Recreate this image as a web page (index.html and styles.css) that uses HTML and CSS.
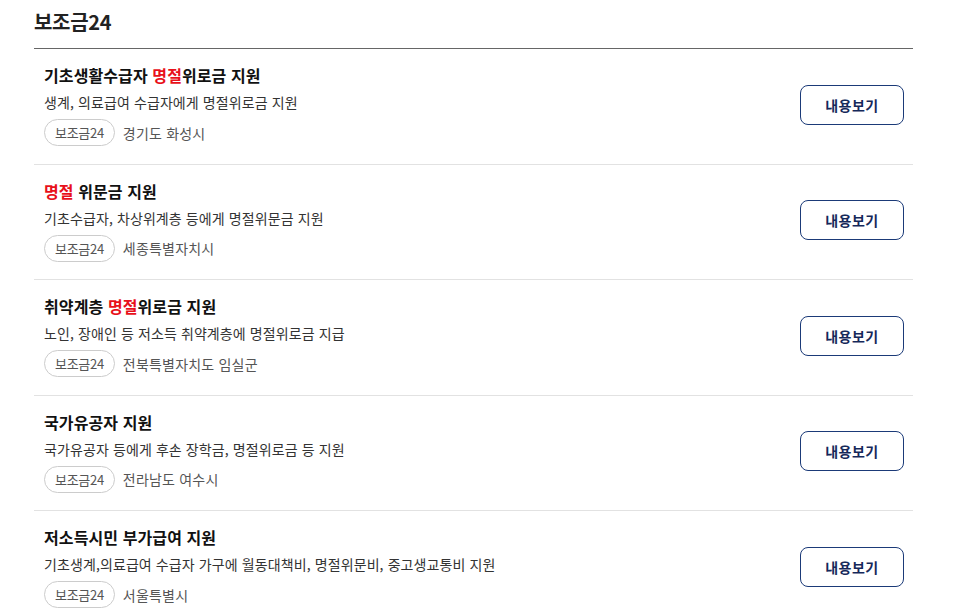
FILE: index.html
```html
<!DOCTYPE html>
<html lang="ko">
<head>
    <meta charset="UTF-8">
    <meta name="viewport" content="width=device-width, initial-scale=1.0">
    <title>보조금24</title>
    <link rel="stylesheet" href="styles.css">
</head>
<body>
    <section class="board">
        <h2 class="board-title">보조금24</h2>
        <ul class="list">
            <li class="item">
                <div class="info">
                    <h3 class="name">기초생활수급자 <em>명절</em>위로금 지원</h3>
                    <p class="desc">생계, 의료급여 수급자에게 명절위로금 지원</p>
                    <div class="meta"><span class="tag">보조금24</span><span class="region">경기도 화성시</span></div>
                </div>
                <button type="button" class="view-btn">내용보기</button>
            </li>
            <li class="item">
                <div class="info">
                    <h3 class="name"><em>명절</em> 위문금 지원</h3>
                    <p class="desc">기초수급자, 차상위계층 등에게 명절위문금 지원</p>
                    <div class="meta"><span class="tag">보조금24</span><span class="region">세종특별자치시</span></div>
                </div>
                <button type="button" class="view-btn">내용보기</button>
            </li>
            <li class="item">
                <div class="info">
                    <h3 class="name">취약계층 <em>명절</em>위로금 지원</h3>
                    <p class="desc">노인, 장애인 등 저소득 취약계층에 명절위로금 지급</p>
                    <div class="meta"><span class="tag">보조금24</span><span class="region">전북특별자치도 임실군</span></div>
                </div>
                <button type="button" class="view-btn">내용보기</button>
            </li>
            <li class="item">
                <div class="info">
                    <h3 class="name">국가유공자 지원</h3>
                    <p class="desc">국가유공자 등에게 후손 장학금, 명절위로금 등 지원</p>
                    <div class="meta"><span class="tag">보조금24</span><span class="region">전라남도 여수시</span></div>
                </div>
                <button type="button" class="view-btn">내용보기</button>
            </li>
            <li class="item">
                <div class="info">
                    <h3 class="name">저소득시민 부가급여 지원</h3>
                    <p class="desc">기초생계,의료급여 수급자 가구에 월동대책비, 명절위문비, 중고생교통비 지원</p>
                    <div class="meta"><span class="tag">보조금24</span><span class="region">서울특별시</span></div>
                </div>
                <button type="button" class="view-btn">내용보기</button>
            </li>
        </ul>
    </section>
</body>
</html>
```

FILE: styles.css
```css
body {
    margin: 0;
    padding: 0;
    background: #fff;
    font-family: 'Noto Sans CJK KR', 'Noto Sans', sans-serif;
    color: #111;
}
.board {
    width: 879px;
    margin-left: 34px;
}
.board-title {
    margin: 0;
    height: 48px;
    font-size: 20px;
    line-height: 43px;
    font-weight: 700;
    letter-spacing: -0.3px;
    color: #222;
    border-bottom: 1px solid #666;
}
.list {
    list-style: none;
    margin: 0;
    padding: 0;
}
.item {
    display: flex;
    align-items: center;
    justify-content: space-between;
    padding: 14px 9px 17.5px 10px;
    border-bottom: 1px solid #e2e2e2;
}
.name {
    margin: 0;
    font-size: 16px;
    line-height: 24px;
    font-weight: 700;
    letter-spacing: 0.1px;
    color: #111;
}
.name em {
    font-style: normal;
    color: #e8101a;
}
.desc {
    margin: 4px 0 0;
    font-size: 14px;
    line-height: 22px;
    color: #333;
    letter-spacing: 0.1px;
}
.meta {
    display: flex;
    align-items: center;
    margin-top: 6px;
}
.tag {
    display: inline-block;
    height: 25px;
    line-height: 25px;
    padding: 0 10px;
    border: 1px solid #ccc;
    border-radius: 14px;
    font-size: 13px;
    color: #555;
    letter-spacing: -0.3px;
}
.region {
    margin-left: 8px;
    font-size: 14px;
    color: #555;
    letter-spacing: 0.2px;
}
.view-btn {
    width: 104px;
    height: 40px;
    border: 1px solid #1b3a78;
    border-radius: 8px;
    background: #fff;
    color: #15285a;
    font-family: 'Noto Sans CJK KR', 'Noto Sans', sans-serif;
    font-size: 14px;
    font-weight: 700;
    letter-spacing: 0.5px;
    cursor: pointer;
}
```
